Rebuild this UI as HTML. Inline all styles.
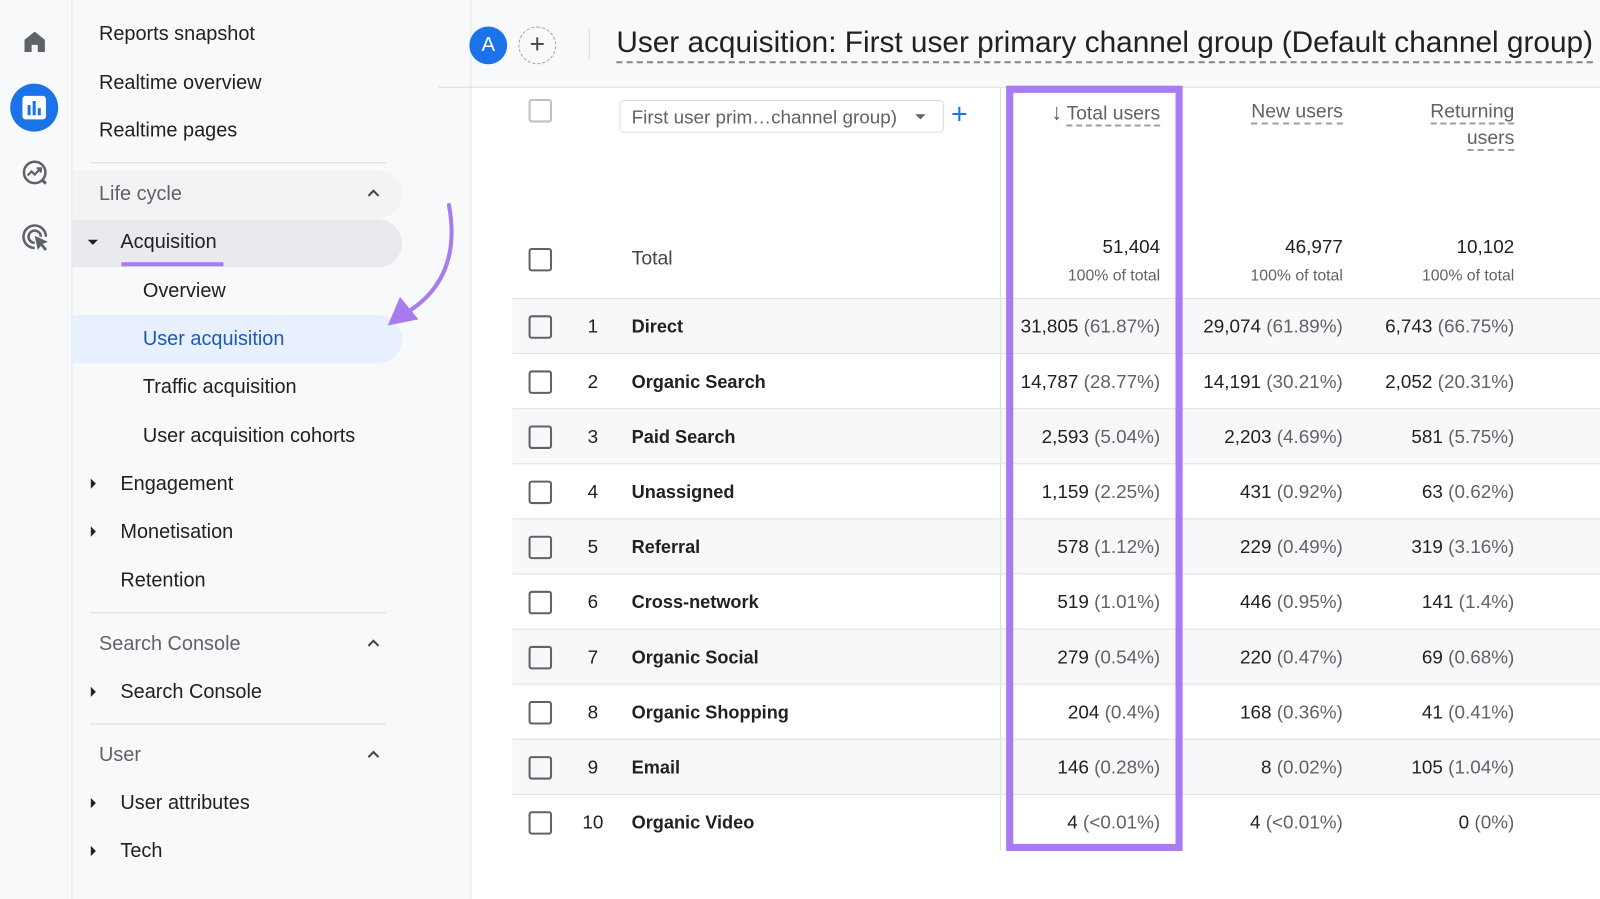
<!DOCTYPE html>
<html><head><meta charset="utf-8"><style>
*{margin:0;padding:0;box-sizing:border-box}
body{width:1600px;height:881px;overflow:hidden;background:#f8f9fa;font-family:"Liberation Sans",Arial,sans-serif;color:#202124;position:relative}
#w{position:absolute;left:0;top:0;width:1568px;height:864px;transform:scale(1.0204);transform-origin:0 0}
.abs{position:absolute}
.rail{left:0;top:0;width:71px;height:881px;border-right:1px solid #e3e5e8;background:#f8f9fa}
.nav{left:71px;top:0;width:391px;height:881px;border-right:1px solid #e3e5e8;background:#f8f9fa}
.ni{position:absolute;font-size:19.5px;line-height:24px;white-space:nowrap}
.sep{position:absolute;left:17px;width:290px;height:1px;background:#dadce0}
.tri{position:absolute;width:0;height:0}
.main{left:462px;top:86px;width:1138px;height:795px;background:#fff}
.row{position:absolute;left:40px;width:1098px;height:54px;border-top:1px solid #e0e0e0;font-size:18.5px}
.row.g{background:#f7f8f9}
.cb{position:absolute;left:16px;width:23px;height:23px;border:2.5px solid #5f6368;border-radius:3px}
.num{position:absolute;width:40px;text-align:center;left:59px}
.nm{position:absolute;left:117px;font-weight:bold;color:#202124;font-size:17.8px;top:17px!important}
.v{position:absolute;text-align:right;white-space:nowrap}
.v span{color:#5f6368}
.hd{position:absolute;font-size:19px;color:#5f6368;text-align:right;line-height:26px}
.hd u{text-decoration:none;border-bottom:2px dashed #9aa0a6}
</style></head><body><div id="w">
<div class="abs rail">
 <svg class="abs" style="left:22px;top:29px" width="24" height="24" viewBox="0 0 24 24"><path d="M12 2 L22 10 V22 H15 V15 H9 V22 H2 V10 Z" fill="#5f6368"/></svg>
 <div class="abs" style="left:10px;top:82px;width:47px;height:47px;border-radius:50%;background:#1a73e8"></div>
 <div class="abs" style="left:22px;top:94px;width:23px;height:23px;border-radius:3px;background:#fff"></div>
 <div class="abs" style="left:27px;top:103px;width:3px;height:10px;background:#1a73e8"></div>
 <div class="abs" style="left:32px;top:99px;width:3px;height:14px;background:#1a73e8"></div>
 <div class="abs" style="left:37px;top:106px;width:3px;height:7px;background:#1a73e8"></div>
 <svg class="abs" style="left:21px;top:156px" width="26" height="26" viewBox="0 0 26 26"><circle cx="13" cy="13" r="10.5" fill="none" stroke="#5f6368" stroke-width="2.5"/><path d="M6 16 L10 12 L13 15 L19 9 M15 9 H19 V13" fill="none" stroke="#5f6368" stroke-width="2.2"/><path d="M20 20 L24 24" stroke="#5f6368" stroke-width="3"/></svg>
 <svg class="abs" style="left:21px;top:219px" width="28" height="28" viewBox="0 0 28 28"><path d="M13 24 A11 11 0 1 1 24 13" fill="none" stroke="#5f6368" stroke-width="2.5"/><path d="M13 19 A6 6 0 1 1 19 13" fill="none" stroke="#5f6368" stroke-width="2.5"/><path d="M13 12 L26 18 L21 20 L25 25 L23 27 L19 22 L16 26 Z" fill="#5f6368"/></svg>
</div>
<div class="abs nav">
 <div class="ni" style="left:26px;top:21px">Reports snapshot</div>
 <div class="ni" style="left:26px;top:69px">Realtime overview</div>
 <div class="ni" style="left:26px;top:116px">Realtime pages</div>
 <div class="sep" style="top:159px"></div>
 <div class="abs" style="left:0;top:167px;width:323px;height:47px;background:#f1f3f4;border-radius:0 24px 24px 0"></div>
 <div class="ni" style="left:26px;top:178px;color:#5f6368">Life cycle</div>
 <svg class="abs" style="left:287px;top:183px" width="16" height="12"><path d="M3 9 L8 4 L13 9" fill="none" stroke="#444" stroke-width="2"/></svg>
 <div class="abs" style="left:0;top:215px;width:323px;height:47px;background:#e8eaed;border-radius:0 24px 24px 0"></div>
 <div class="tri" style="left:15px;top:235px;border-left:5px solid transparent;border-right:5px solid transparent;border-top:5px solid #202124"></div>
 <div class="ni" style="left:47px;top:225px">Acquisition</div>
 <div class="abs" style="left:48px;top:257px;width:100px;height:4px;background:#a97bf0"></div>
 <div class="ni" style="left:69px;top:273px">Overview</div>
 <div class="abs" style="left:0;top:309px;width:323px;height:47px;background:#e8f0fe;border-radius:0 24px 24px 0"></div>
 <div class="ni" style="left:69px;top:320px;color:#1c5bb5">User acquisition</div>
 <div class="ni" style="left:69px;top:367px">Traffic acquisition</div>
 <div class="ni" style="left:69px;top:415px">User acquisition cohorts</div>
 <div class="tri" style="left:18px;top:469px;border-top:5px solid transparent;border-bottom:5px solid transparent;border-left:5px solid #202124"></div>
 <div class="ni" style="left:47px;top:462px">Engagement</div>
 <div class="tri" style="left:18px;top:516px;border-top:5px solid transparent;border-bottom:5px solid transparent;border-left:5px solid #202124"></div>
 <div class="ni" style="left:47px;top:509px">Monetisation</div>
 <div class="ni" style="left:47px;top:557px">Retention</div>
 <div class="sep" style="top:600px"></div>
 <div class="ni" style="left:26px;top:619px;color:#5f6368">Search Console</div>
 <svg class="abs" style="left:287px;top:624px" width="16" height="12"><path d="M3 9 L8 4 L13 9" fill="none" stroke="#444" stroke-width="2"/></svg>
 <div class="tri" style="left:18px;top:673px;border-top:5px solid transparent;border-bottom:5px solid transparent;border-left:5px solid #202124"></div>
 <div class="ni" style="left:47px;top:666px">Search Console</div>
 <div class="sep" style="top:709px"></div>
 <div class="ni" style="left:26px;top:728px;color:#5f6368">User</div>
 <svg class="abs" style="left:287px;top:733px" width="16" height="12"><path d="M3 9 L8 4 L13 9" fill="none" stroke="#444" stroke-width="2"/></svg>
 <div class="tri" style="left:18px;top:782px;border-top:5px solid transparent;border-bottom:5px solid transparent;border-left:5px solid #202124"></div>
 <div class="ni" style="left:47px;top:775px">User attributes</div>
 <div class="tri" style="left:18px;top:829px;border-top:5px solid transparent;border-bottom:5px solid transparent;border-left:5px solid #202124"></div>
 <div class="ni" style="left:47px;top:822px">Tech</div>
</div>
<div class="abs" style="left:430px;top:85px;width:1170px;height:1px;background:#dadce0"></div>
<div class="abs" style="left:460px;top:26px;width:37px;height:37px;border-radius:50%;background:#1a73e8;color:#fff;font-size:20px;text-align:center;line-height:37px">A</div>
<div class="abs" style="left:508px;top:26px;width:37px;height:37px;border-radius:50%;border:1.5px dashed #9aa0a6;color:#444;font-size:26px;text-align:center;line-height:33px">+</div>
<div class="abs" style="left:577px;top:28px;width:1px;height:30px;background:#dadce0"></div>
<div class="abs" style="left:604px;top:24px;font-size:29.2px;white-space:nowrap;line-height:36px;border-bottom:2px dashed #80868b">User acquisition: First user primary channel group (Default channel group)</div>
<div class="abs main">
 <div class="abs" style="left:56px;top:11px;width:23px;height:23px;border:2px solid #bdc1c6;border-radius:3px"></div>
 <div class="abs" style="left:145px;top:12px;width:318px;height:32px;border:1px solid #dadce0;border-radius:4px;font-size:18.5px;color:#5f6368;padding:5px 0 0 11px;white-space:nowrap">First user prim…channel group)</div>
 <div class="tri" style="left:435px;top:26px;border-left:5px solid transparent;border-right:5px solid transparent;border-top:5px solid #5f6368"></div>
 <div class="abs" style="left:470px;top:8px;font-size:28px;color:#1a73e8;line-height:36px">+</div>
 <div class="abs" style="left:518px;top:0;width:1px;height:745px;background:#e0e0e0"></div>
 <div class="hd" style="right:463px;top:11px;width:200px"><span style="font-size:22px;margin-right:4px">↓</span><u>Total users</u></div>
 <div class="hd" style="right:284px;top:11px;width:200px"><u>New users</u></div>
 <div class="hd" style="right:116px;top:11px;width:200px"><u>Returning</u><br><u>users</u></div>
 <div class="cb" style="left:56px;top:157px"></div>
 <div class="abs" style="left:157px;top:157px;font-size:19px;color:#444">Total</div>
 <div class="v" style="right:463px;top:145px;font-size:18.5px">51,404</div>
 <div class="v" style="right:463px;top:176px;font-size:15.5px;color:#5f6368">100% of total</div>
 <div class="v" style="right:284px;top:145px;font-size:18.5px">46,977</div>
 <div class="v" style="right:284px;top:176px;font-size:15.5px;color:#5f6368">100% of total</div>
 <div class="v" style="right:116px;top:145px;font-size:18.5px">10,102</div>
 <div class="v" style="right:116px;top:176px;font-size:15.5px;color:#5f6368">100% of total</div>
</div>
<div id="rows"></div>
<div class="abs" style="left:986px;top:84px;width:173px;height:750px;border:7px solid #a97bf0"></div>
<svg class="abs" style="left:370px;top:195px" width="90" height="135"><path d="M70 6 C80 60 60 95 22 115" fill="none" stroke="#a97bf0" stroke-width="4" stroke-linecap="round"/><path d="M10 124 L22 96 L40 118 Z" fill="#a97bf0"/></svg>
</div>
<script>
var d=[["Direct","31,805","61.87%","29,074","61.89%","6,743","66.75%"],["Organic Search","14,787","28.77%","14,191","30.21%","2,052","20.31%"],["Paid Search","2,593","5.04%","2,203","4.69%","581","5.75%"],["Unassigned","1,159","2.25%","431","0.92%","63","0.62%"],["Referral","578","1.12%","229","0.49%","319","3.16%"],["Cross-network","519","1.01%","446","0.95%","141","1.4%"],["Organic Social","279","0.54%","220","0.47%","69","0.68%"],["Organic Shopping","204","0.4%","168","0.36%","41","0.41%"],["Email","146","0.28%","8","0.02%","105","1.04%"],["Organic Video","4","&lt;0.01%","4","&lt;0.01%","0","0%"]];
var h="";
d.forEach(function(r,i){var t=292+i*54;
h+='<div class="row'+(i%2==0?' g':'')+'" style="left:502px;top:'+t+'px">'+
'<div class="cb" style="top:16px"></div><div class="num" style="top:16px">'+(i+1)+'</div><div class="nm">'+r[0]+'</div>'+
'<div class="abs" style="left:478px;top:0;width:1px;height:54px;background:#e0e0e0"></div>'+
'<div class="v" style="right:463px;top:16px">'+r[1]+' <span>('+r[2]+')</span></div>'+
'<div class="v" style="right:284px;top:16px">'+r[3]+' <span>('+r[4]+')</span></div>'+
'<div class="v" style="right:116px;top:16px">'+r[5]+' <span>('+r[6]+')</span></div></div>';});
document.getElementById("rows").innerHTML=h;
</script>
</body></html>
